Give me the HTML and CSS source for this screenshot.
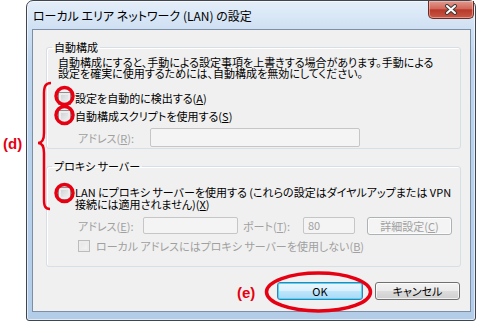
FILE: index.html
```html
<!DOCTYPE html>
<html lang="ja">
<head>
  <meta charset="UTF-8">
  <title>ローカル エリア ネットワーク (LAN) の設定</title>
  <link rel="stylesheet" href="styles.css">
</head>
<body>
  <div class="dialog">
    <div class="titlebar">
      <span class="title">ローカル エリア ネットワーク (LAN) の設定</span>
      <span class="close">
        <svg width="14" height="11" viewBox="0 0 14 11">
          <path d="M3 2 L11 9 M11 2 L3 9" stroke="#3c3c3c" stroke-width="4" stroke-linecap="round"/>
          <path d="M3 2 L11 9 M11 2 L3 9" stroke="#fff" stroke-width="2" stroke-linecap="round"/>
        </svg>
      </span>
    </div>

    <div class="client">
      <!-- 自動構成 -->
      <fieldset class="group">
        <legend>自動構成</legend>
        <p class="desc">自動構成にすると、手動による設定事項を上書きする場合があります。手動による<br>設定を確実に使用するためには、自動構成を無効にしてください。</p>
        <label class="check first"><span class="box"></span>設定を自動的に検出する(<u>A</u>)</label>
        <label class="check"><span class="box"></span>自動構成スクリプトを使用する(<u>S</u>)</label>
        <div class="field-row row-script">
          <span class="field-label label-script">アドレス(<u>R</u>):</span>
          <span class="textbox box-script"></span>
        </div>
      </fieldset>

      <!-- プロキシ サーバー -->
      <fieldset class="group group-proxy">
        <legend>プロキシ サーバー</legend>
        <label class="check check-proxy"><span class="box"></span><span>LAN にプロキシ サーバーを使用する (これらの設定はダイヤルアップまたは VPN<br>接続には適用されません)(<u>X</u>)</span></label>
        <div class="field-row row-proxy">
          <span class="field-label label-proxy">アドレス(<u>E</u>):</span>
          <span class="textbox box-proxy"></span>
          <span class="field-label label-port">ポート(<u>T</u>):</span>
          <span class="textbox box-port">80</span>
          <span class="btn btn-disabled">詳細設定(<u>C</u>)</span>
        </div>
        <label class="check check-local disabled"><span class="box"></span>ローカル アドレスにはプロキシ サーバーを使用しない(<u>B</u>)</label>
      </fieldset>

      <div class="actions">
        <span class="btn btn-default">OK</span>
        <span class="btn">キャンセル</span>
      </div>
    </div>
  </div>

  <!-- red annotations drawn over the screenshot -->
  <div class="notes">
    <svg class="marks" width="482" height="321" viewBox="0 0 482 321">
      <path d="M51 83 C45 83 44 87 44 94 L44 133 C44 140 42 143 38 143 C42 143 44 146 44 153 L44 199 C44 206 45 209 50 209" fill="none" stroke="#e60012" stroke-width="2.5"/>
      <circle cx="64.5" cy="96" r="8.5" fill="none" stroke="#e60012" stroke-width="3.5"/>
      <circle cx="64.5" cy="115" r="8.5" fill="none" stroke="#e60012" stroke-width="3.5"/>
      <circle cx="64.5" cy="193" r="8.5" fill="none" stroke="#e60012" stroke-width="3.5"/>
      <ellipse cx="318.5" cy="292" rx="52" ry="19" fill="none" stroke="#e60012" stroke-width="3.5"/>
    </svg>
    <span class="note note-d">(d)</span>
    <span class="note note-e">(e)</span>
  </div>
</body>
</html>
```

FILE: styles.css
```css
body {
  margin: 0;
  background: #fff;
  font-family: "Noto Sans CJK JP", "Liberation Sans", sans-serif;
  font-size: 11px;
  color: #000;
  position: relative;
  width: 482px;
  height: 321px;
  overflow: hidden;
}
/* window frame */
.dialog {
  margin-left: 26px;
  width: 448px;
  height: 319px;
  border: 1px solid #40464f;
  border-radius: 7px 7px 3px 3px;
  background: linear-gradient(#e4eef9, #cfe0f3 28px, #bdd5ee 60px, #b3cde9);
  box-shadow: inset 0 0 0 1px rgba(255, 255, 255, 0.6);
}
.titlebar {
  height: 28px;
  display: flex;
  justify-content: space-between;
  align-items: flex-start;
  padding: 0 1px 0 6px;
}
.title {
  font-size: 12px;
  line-height: 12px;
  margin-top: 9px;
  font-feature-settings: "palt";
}
.close {
  width: 46px;
  height: 18px;
  box-sizing: border-box;
  border: 1px solid #6b2c26;
  border-top: none;
  border-radius: 0 0 5px 5px;
  background: linear-gradient(#e09a8e, #d2685a 45%, #b7392a 52%, #c85846);
  display: flex;
  justify-content: center;
  align-items: center;
  box-shadow: inset 0 0 0 1px rgba(255, 210, 200, 0.5);
}
/* client area */
.client {
  margin: 0 4px 0 5px;
  height: 281px;
  border: 1px solid #7d8fa6;
  background: #f0f0f0;
  padding: 0 9px 0 13px;
}
.group {
  margin: 11px 0 0;
  padding: 0 0 1px 11px;
  border: 1px solid #d5dfe5;
  border-radius: 3px;
  box-shadow: inset 1px 1px 0 #fff;
  min-inline-size: 0;
}
.group legend {
  margin-left: -6px;
  padding: 0 2px;
  line-height: 12px;
  font-feature-settings: "palt";
}
.group-proxy {
  padding-bottom: 11px;
}
.desc {
  margin: 4px 0 0;
  line-height: 11px;
  font-feature-settings: "palt";
}
.check {
  display: flex;
  align-items: center;
  height: 18px;
  line-height: 11px;
  font-feature-settings: "palt";
}
.check.first {
  margin-top: 10px;
}
.check .box {
  width: 13px;
  height: 13px;
  box-sizing: border-box;
  border: 1px solid #8e8f8f;
  background: linear-gradient(135deg, #c9cdd2, #f5f5f5);
  box-shadow: inset 0 0 0 2px #ececec;
  margin-right: 4px;
  flex-shrink: 0;
}
.check-proxy {
  height: auto;
  align-items: flex-start;
  margin-top: 14px;
  line-height: 12px;
}
.check-proxy .box {
  margin-top: 1px;
}
.check-local {
  margin-top: 3px;
  padding-left: 20px;
}
.check-local .box {
  width: 12px;
  height: 12px;
  margin-right: 6px;
}
.disabled {
  color: #a0a0a0;
}
.disabled .box {
  border-color: #bcbcbc;
  background: linear-gradient(135deg, #e2e2e2, #f8f8f8);
}
/* address rows */
.field-row {
  display: flex;
  align-items: center;
  padding-left: 20px;
  color: #a0a0a0;
  font-feature-settings: "palt";
}
.row-script {
  margin-top: 3px;
  height: 19px;
}
.row-proxy {
  margin-top: 7px;
  height: 17px;
}
.label-script { width: 72px; }
.label-proxy { width: 65px; }
.label-port { width: 60px; margin-left: 5px; }
.textbox {
  box-sizing: border-box;
  height: 100%;
  border: 1px solid #c6c6c6;
  border-radius: 2px;
  background: #f4f4f4;
  padding-left: 4px;
  line-height: 15px;
}
.box-script { width: 210px; }
.box-proxy { width: 95px; }
.box-port { width: 52px; }
/* buttons */
.btn {
  box-sizing: border-box;
  width: 85px;
  height: 18px;
  display: flex;
  justify-content: center;
  align-items: center;
  border: 1px solid #707070;
  border-radius: 3px;
  background: linear-gradient(#f2f2f2, #ebebeb 50%, #dddddd 50%, #cfcfcf);
  box-shadow: inset 0 0 0 1px rgba(255, 255, 255, 0.7);
  font-feature-settings: "palt";
  color: #000;
}
.btn-disabled {
  margin-left: 12px;
  height: 18px;
  border-color: #adb2b5;
  background: #f4f4f4;
  color: #a0a0a0;
}
.btn-default {
  width: 86px;
  border-color: #3c7fb1;
  background: linear-gradient(#eaf6fd, #d9f0fc 50%, #bee6fd 50%, #a7d9f5);
  box-shadow: inset 0 0 0 1px #48d8f8;
}
.actions {
  display: flex;
  justify-content: flex-end;
  gap: 12px;
  margin-top: 15px;
  padding-right: 1px;
}
/* annotations */
.notes .marks {
  position: absolute;
  left: 0;
  top: 0;
}
.note {
  position: absolute;
  color: #e60012;
  font-family: "Liberation Sans", sans-serif;
  font-weight: bold;
  font-size: 15px;
  line-height: 16px;
}
.note-d { left: 3px; top: 136px; }
.note-e { left: 237px; top: 285px; }
```
